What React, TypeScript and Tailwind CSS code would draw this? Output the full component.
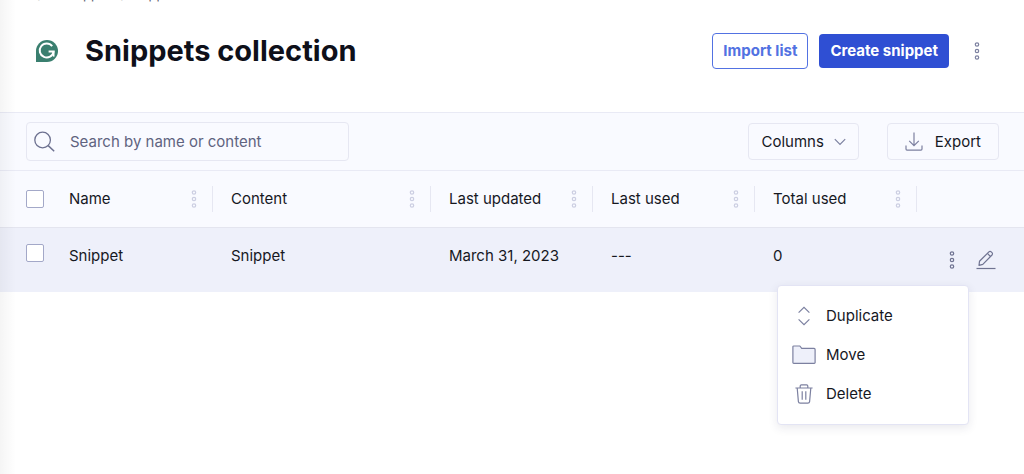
import { useState } from "react";

type Snippet = {
    id: number;
    name: string;
    content: string;
    lastUpdated: string;
    lastUsed: string | null;
    totalUsed: number;
};

const columns = [
    { label: "Name", width: "w-[162px]" },
    { label: "Content", width: "w-[218px]" },
    { label: "Last updated", width: "w-[162px]" },
    { label: "Last used", width: "w-[162px]" },
    { label: "Total used", width: "w-[162px]" },
];

const snippets: Snippet[] = [
    {
        id: 1,
        name: "Snippet",
        content: "Snippet",
        lastUpdated: "March 31, 2023",
        lastUsed: null,
        totalUsed: 0,
    },
];

function DotsIcon() {
    return (
        <svg width="6" height="20" viewBox="0 0 6 20" fill="none" stroke="currentColor" strokeWidth="1.2">
            <circle cx="3" cy="3.5" r="1.7" />
            <circle cx="3" cy="10" r="1.7" />
            <circle cx="3" cy="16.5" r="1.7" />
        </svg>
    );
}

function LogoIcon() {
    return (
        <svg width="22" height="22" viewBox="0 0 22 22" fill="none">
            <path d="M0 11a11 11 0 1 1 11 11H0z" fill="#3a7f6f" />
            <path
                d="M16.2 6.2A7 7 0 1 0 17.6 11.6H12.6"
                stroke="#fff"
                strokeWidth="2"
            />
            <path d="M17.7 11.2v5.4" stroke="#fff" strokeWidth="1.6" />
        </svg>
    );
}

function SearchIcon() {
    return (
        <svg width="22" height="22" viewBox="0 0 22 22" fill="none" stroke="currentColor" strokeWidth="1.3">
            <circle cx="8.6" cy="9" r="7.8" />
            <path d="M14.2 14.6l6 5.6" strokeWidth="1.5" />
        </svg>
    );
}

function ChevronIcon() {
    return (
        <svg width="12" height="8" viewBox="0 0 12 8" fill="none" stroke="currentColor" strokeWidth="1.2">
            <path d="M0.8 1.2L6 6.4l5.2-5.2" />
        </svg>
    );
}

function ExportIcon() {
    return (
        <svg width="18" height="20" viewBox="0 0 18 20" fill="none" stroke="currentColor" strokeWidth="1.2">
            <path d="M9 .5v13M4.2 8.9L9 13.7l4.8-4.8" />
            <path d="M1 13.5v3.6a1 1 0 0 0 1 1h14a1 1 0 0 0 1-1v-3.6" />
        </svg>
    );
}

function EditIcon() {
    return (
        <svg width="20" height="20" viewBox="0 0 20 20" fill="none" stroke="currentColor" strokeWidth="1.2" strokeLinejoin="round">
            <path d="M3 15.4l.5-4.2L12.9 1.9a1.6 1.6 0 0 1 2.3 0l.8.8a1.6 1.6 0 0 1 0 2.3L6.8 14.4z" />
            <path d="M11.4 3.4l3.1 3.1" />
            <path d="M.5 18.5h19" />
        </svg>
    );
}

function DuplicateIcon() {
    return (
        <svg width="24" height="20" viewBox="0 0 24 20" fill="none" stroke="currentColor" strokeWidth="1.2">
            <path d="M6.6 6.6L12 1.4l5.4 5.2M6.6 13.4l5.4 5.2 5.4-5.2" />
        </svg>
    );
}

function FolderIcon() {
    return (
        <svg width="24" height="20" viewBox="0 0 24 20" fill="#eef0fa" stroke="currentColor" strokeWidth="1.2" strokeLinejoin="round">
            <path d="M.9 1.8a.8.8 0 0 1 .8-.8h6.2l1.8 2.4h12.4a1 1 0 0 1 1 1v13.2a.8.8 0 0 1-.8.8H1.7a.8.8 0 0 1-.8-.8z" />
        </svg>
    );
}

function TrashIcon() {
    return (
        <svg width="24" height="20" viewBox="0 0 24 20" fill="none" stroke="currentColor" strokeWidth="1.2">
            <path d="M3.4 4h17.2M8.2 4V2a1.2 1.2 0 0 1 1.2-1.2h5.2A1.2 1.2 0 0 1 15.8 2v2" />
            <path d="M5.2 4l1.2 13.6a1.8 1.8 0 0 0 1.8 1.6h7.6a1.8 1.8 0 0 0 1.8-1.6L18.8 4" />
            <path d="M10.2 7.2v8.6M13.8 7.2v8.6" />
        </svg>
    );
}

const menuItems = [
    { label: "Duplicate", Icon: DuplicateIcon },
    { label: "Move", Icon: FolderIcon },
    { label: "Delete", Icon: TrashIcon },
];

function Checkbox({ label }: { label: string }) {
    return (
        <input
            type="checkbox"
            aria-label={label}
            className="block size-[18px] appearance-none rounded-xs border border-[#a3a8c8] bg-white checked:bg-[#2f4fd3]"
        />
    );
}

function SnippetRow({ snippet }: { snippet: Snippet }) {
    const [menuOpen, setMenuOpen] = useState(true);

    return (
        <tr className="h-[65px] bg-[#eef0fa] align-top">
            <td className="pt-4 pl-[26px]">
                <Checkbox label={`Select ${snippet.name}`} />
            </td>
            <td className="pt-4 pl-[18px]">{snippet.name}</td>
            <td className="pt-4 pl-[18px]">{snippet.content}</td>
            <td className="pt-4 pl-[18px]">{snippet.lastUpdated}</td>
            <td className="pt-4 pl-[18px]">{snippet.lastUsed ?? "---"}</td>
            <td className="pt-4 pl-[18px]">{snippet.totalUsed}</td>
            <td className="relative pt-[22px] pr-7">
                <div className="flex items-center justify-end gap-[21px] text-[#6f7391]">
                    <button
                        type="button"
                        aria-label="More actions"
                        aria-expanded={menuOpen}
                        onClick={() => setMenuOpen(!menuOpen)}
                    >
                        <DotsIcon />
                    </button>
                    <button type="button" aria-label="Edit snippet">
                        <EditIcon />
                    </button>
                </div>
                {menuOpen && (
                    <div
                        role="menu"
                        className="absolute top-[57px] right-[55px] z-10 flex w-48 flex-col rounded-sm border border-[#e3e4f4] bg-white pt-[11px] pb-[10px] shadow-[0_3px_10px_rgba(40,40,80,0.10)]"
                    >
                        {menuItems.map(({ label, Icon }) => (
                            <button
                                key={label}
                                type="button"
                                role="menuitem"
                                className="flex h-[39px] items-center gap-[10px] px-[14px]"
                            >
                                <span className="text-[#7c80a0]">
                                    <Icon />
                                </span>
                                {label}
                            </button>
                        ))}
                    </div>
                )}
            </td>
        </tr>
    );
}

export default function App() {
    const [query, setQuery] = useState("");

    return (
        <div className="relative min-h-screen bg-white font-['Inter',sans-serif] text-[15px] leading-6 text-[#16181f]">
            <header className="flex flex-col border-b border-[#e9eaf5]">
                <nav aria-label="Breadcrumb" className="flex h-[2px] items-end pl-[38px] text-[13px] leading-4 text-[#5d6070]">
                    <a href="#all">/ All snippets / Snippets</a>
                </nav>
                <div className="flex items-center pt-[31px] pr-11 pb-[43px] pl-9">
                    <LogoIcon />
                    <h1 className="grow pl-[27px] text-[29px] leading-9 font-bold text-[#0e101a]">
                        Snippets collection
                    </h1>
                    <div className="flex items-center gap-[11px]">
                        <button
                            type="button"
                            className="h-9 rounded-sm border border-[#5272e2] px-[10px] font-bold text-[#5272e2]"
                        >
                            Import list
                        </button>
                        <button
                            type="button"
                            className="h-[34px] rounded-sm bg-[#2f4fd3] px-[11px] font-bold text-white"
                        >
                            Create snippet
                        </button>
                        <button type="button" aria-label="Collection options" className="pl-[14px] text-[#7c80a0]">
                            <DotsIcon />
                        </button>
                    </div>
                </div>
            </header>

            <div className="flex h-[58px] items-center border-b border-[#e9eaf5] bg-[#f9faff] pr-[25px] pl-[26px]">
                <label className="flex h-[39px] w-[323px] items-center gap-[14px] rounded-sm border border-[#e6e7f2] px-[7px] text-[#6d7190]">
                    <SearchIcon />
                    <input
                        type="text"
                        aria-label="Search by name or content"
                        placeholder="Search by name or content"
                        value={query}
                        onChange={(e) => setQuery(e.target.value)}
                        className="min-w-0 grow bg-transparent outline-none placeholder:text-[#5f6380]"
                    />
                </label>
                <div className="ml-auto flex gap-7">
                    <button
                        type="button"
                        aria-haspopup="menu"
                        className="flex h-[37px] items-center gap-[10px] rounded-sm border border-[#e6e7f2] px-3"
                    >
                        Columns
                        <span className="text-[#7c80a0]">
                            <ChevronIcon />
                        </span>
                    </button>
                    <button
                        type="button"
                        className="flex h-[37px] items-center gap-3 rounded-sm border border-[#e6e7f2] px-[17px]"
                    >
                        <span className="text-[#7c80a0]">
                            <ExportIcon />
                        </span>
                        Export
                    </button>
                </div>
            </div>

            <table className="w-full table-fixed">
                <thead>
                    <tr className="h-14 border-b border-[#e4e5ef] bg-[#f9faff]">
                        <th className="w-[51px] pl-[26px]">
                            <Checkbox label="Select all snippets" />
                        </th>
                        {columns.map((column) => (
                            <th key={column.label} className={`${column.width} text-left font-normal`}>
                                <div className="flex h-[26px] items-center justify-between border-r border-[#e6e7f2] pr-[15px] pl-[18px]">
                                    {column.label}
                                    <button type="button" aria-label={`${column.label} options`} className="text-[#cccee2]">
                                        <DotsIcon />
                                    </button>
                                </div>
                            </th>
                        ))}
                        <th aria-label="Actions"></th>
                    </tr>
                </thead>
                <tbody>
                    {snippets.map((snippet) => (
                        <SnippetRow key={snippet.id} snippet={snippet} />
                    ))}
                </tbody>
            </table>

            <div className="pointer-events-none absolute inset-y-0 left-0 w-4 bg-linear-to-r from-black/4 to-transparent"></div>
        </div>
    );
}
